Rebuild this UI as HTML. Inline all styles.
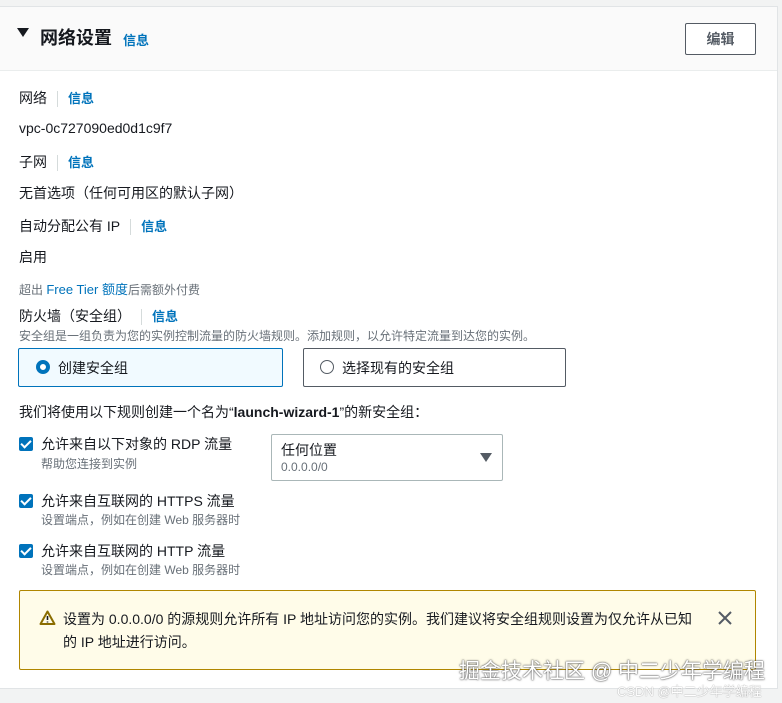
<!DOCTYPE html>
<html><head><meta charset="utf-8"><style>
*{margin:0;padding:0;box-sizing:border-box}
body{width:782px;height:703px;background:#f2f3f3;font-family:"Liberation Sans","Noto Sans CJK SC",sans-serif;color:#16191f;position:relative;overflow:hidden}
.p{position:absolute;left:0;top:6px;width:778px;height:683px;background:#fff;border:1px solid #e1e4e6;border-left:none}
.hd{position:absolute;left:0;top:0;width:777px;height:64px;background:#fafafa;border-bottom:1px solid #eaeded}
.a{position:absolute;white-space:nowrap}
.l{color:#0073bb;font-weight:bold;font-size:13px}
.sep{display:inline-block;width:1px;height:16px;background:#d5dbdb;vertical-align:middle;margin:0 10px 0 10px}
.t{font-size:14px}
.s{font-size:12px;color:#687078}
.cb{position:absolute;left:19px;width:14px;height:14px;background:#0073bb;border-radius:2px}
.cb:after{content:"";position:absolute;left:4px;top:1px;width:4px;height:8px;border:solid #fff;border-width:0 2px 2px 0;transform:rotate(45deg)}
</style></head><body>
<div class="p">
<div class="hd">
<div class="a" style="left:17px;top:21px;width:0;height:0;border-left:6px solid transparent;border-right:6px solid transparent;border-top:9px solid #16191f"></div>
<div class="a" style="left:40px;top:17px;font-size:18px;font-weight:bold">网络设置</div>
<div class="a l" style="left:123px;top:23px">信息</div>
<div class="a" style="left:685px;top:16px;width:71px;height:32px;border:1px solid #545b64;border-radius:2px;background:#fff;text-align:center;line-height:30px;font-size:14px;font-weight:bold;color:#545b64">编辑</div>
</div>
<div class="a t" style="left:19px;top:81px">网络<span class="sep"></span><span class="l">信息</span></div>
<div class="a t" style="left:19px;top:113px">vpc-0c727090ed0d1c9f7</div>
<div class="a t" style="left:19px;top:145px">子网<span class="sep"></span><span class="l">信息</span></div>
<div class="a t" style="left:19px;top:176px">无首选项（任何可用区的默认子网）</div>
<div class="a t" style="left:19px;top:209px">自动分配公有 IP<span class="sep"></span><span class="l">信息</span></div>
<div class="a t" style="left:19px;top:240px">启用</div>
<div class="a s" style="left:19px;top:272px">超出 <span style="color:#0073bb;font-size:13px">Free Tier 额度</span>后需额外付费</div>
<div class="a t" style="left:19px;top:299px">防火墙（安全组）<span class="sep"></span><span class="l">信息</span></div>
<div class="a s" style="left:19px;top:320px">安全组是一组负责为您的实例控制流量的防火墙规则。添加规则，以允许特定流量到达您的实例。</div>
<div class="a" style="left:18px;top:341px;width:265px;height:39px;border:1px solid #0073bb;background:#f1faff;border-radius:2px"></div>
<div class="a" style="left:36px;top:353px;width:14px;height:14px;border-radius:50%;border:4px solid #0073bb;background:#fff"></div>
<div class="a t" style="left:58px;top:351px">创建安全组</div>
<div class="a" style="left:303px;top:341px;width:263px;height:39px;border:1px solid #545b64;border-radius:2px"></div>
<div class="a" style="left:320px;top:353px;width:14px;height:14px;border-radius:50%;border:1px solid #545b64"></div>
<div class="a t" style="left:342px;top:351px">选择现有的安全组</div>
<div class="a t" style="left:19px;top:395px">我们将使用以下规则创建一个名为“<b>launch-wizard-1</b>”的新安全组：</div>
<div class="cb" style="top:430px"></div>
<div class="a t" style="left:41px;top:427px">允许来自以下对象的 RDP 流量</div>
<div class="a s" style="left:41px;top:448px">帮助您连接到实例</div>
<div class="a" style="left:271px;top:427px;width:232px;height:47px;border:1px solid #aab7b8;border-radius:2px"></div>
<div class="a t" style="left:281px;top:433px">任何位置</div>
<div class="a s" style="left:281px;top:453px">0.0.0.0/0</div>
<div class="a" style="left:480px;top:446px;width:0;height:0;border-left:6px solid transparent;border-right:6px solid transparent;border-top:9px solid #545b64"></div>
<div class="cb" style="top:487px"></div>
<div class="a t" style="left:41px;top:484px">允许来自互联网的 HTTPS 流量</div>
<div class="a s" style="left:41px;top:504px">设置端点，例如在创建 Web 服务器时</div>
<div class="cb" style="top:537px"></div>
<div class="a t" style="left:41px;top:534px">允许来自互联网的 HTTP 流量</div>
<div class="a s" style="left:41px;top:554px">设置端点，例如在创建 Web 服务器时</div>
<div class="a" style="left:19px;top:583px;width:737px;height:80px;background:#fffce9;border:1px solid #b08600;border-radius:2px"></div>
<svg class="a" style="left:39px;top:603px" width="17" height="15" viewBox="0 0 17 15"><path d="M8.5 1.5L15.5 14H1.5Z" fill="none" stroke="#8a6d00" stroke-width="2" stroke-linejoin="round"/><path d="M8.5 6v4M8.5 11.5v1" stroke="#16191f" stroke-width="1.6"/></svg>
<div class="a t" style="left:63px;top:601px;line-height:23px">设置为 0.0.0.0/0 的源规则允许所有 IP 地址访问您的实例。我们建议将安全组规则设置为仅允许从已知<br>的 IP 地址进行访问。</div>
<svg class="a" style="left:718px;top:604px" width="14" height="14"><path d="M1 1L13 13M13 1L1 13" stroke="#545b64" stroke-width="2"/></svg>
</div>
<div class="a" style="left:459px;top:655px;font-size:21px;color:#fff;text-shadow:0 0 2px #555,0 0 1px #333">掘金技术社区 @ 中二少年学编程</div>
<div class="a" style="left:617px;top:681px;font-size:13px;color:#fff;text-shadow:0 0 1px #777">CSDN @中二少年学编程</div>
</body></html>
